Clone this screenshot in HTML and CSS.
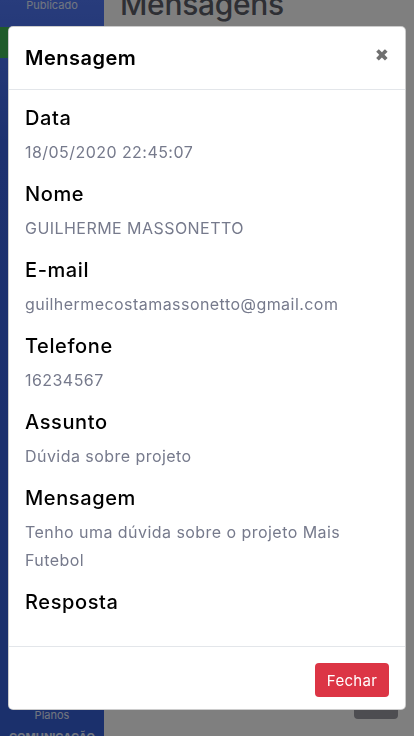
FILE: index.html
```html
<!DOCTYPE html>
<html lang="pt-BR">
<head>
    <meta charset="UTF-8">
    <meta name="viewport" content="width=device-width, initial-scale=1.0">
    <title>Mensagens</title>
    <link rel="stylesheet" href="styles.css">
</head>
<body>
    <div class="layout">
        <!-- Menu lateral -->
        <aside class="sidebar">
            <span class="side-item">Publicado</span>
            <span class="side-active"></span>
            <span class="side-spacer"></span>
            <span class="side-item">Planos</span>
            <span class="side-group">COMUNICAÇÃO</span>
        </aside>
        <main class="content">
            <h1 class="page-title">Mensagens</h1>
            <div class="content-spacer"></div>
            <div class="content-actions">
                <span class="btn-back"></span>
            </div>
        </main>
    </div>

    <div class="backdrop"></div>

    <!-- Modal da mensagem -->
    <div class="modal">
        <div class="modal-header">
            <h5 class="modal-title">Mensagem</h5>
            <button type="button" class="close">&#10006;</button>
        </div>
        <div class="modal-body">
            <h5>Data</h5>
            <p>18/05/2020 22:45:07</p>
            <h5>Nome</h5>
            <p>GUILHERME MASSONETTO</p>
            <h5>E-mail</h5>
            <p>guilhermecostamassonetto@gmail.com</p>
            <h5>Telefone</h5>
            <p>16234567</p>
            <h5>Assunto</h5>
            <p>Dúvida sobre projeto</p>
            <h5>Mensagem</h5>
            <p>Tenho uma dúvida sobre o projeto Mais Futebol</p>
            <h5>Resposta</h5>
            <p></p>
        </div>
        <div class="modal-footer">
            <button type="button" class="btn-danger">Fechar</button>
        </div>
    </div>
</body>
</html>
```
FILE: styles.css
```css
* {
    box-sizing: border-box;
}
body {
    margin: 0;
    font-family: Inter, "Open Sans", sans-serif;
    background-color: #fff;
    color: #212529;
    overflow: hidden;
}
.layout {
    display: flex;
    height: 100vh;
}
.sidebar {
    width: 104px;
    flex-shrink: 0;
    background: linear-gradient(#5078f8, #3a62de 20%, #3660d8);
    display: flex;
    flex-direction: column;
    align-items: center;
}
.side-item {
    font-size: 11px;
    color: #e4ecff;
    line-height: 14px;
    margin-top: -2px;
}
.side-active {
    width: 100%;
    height: 31px;
    margin-top: 15px;
    background: #40b656;
    border-radius: 0 12px 12px 0;
}
.side-spacer {
    flex: 1;
}
.side-group {
    font-size: 11px;
    font-weight: 700;
    color: #e4ecff;
    margin-top: 8px;
    margin-bottom: -8px;
}
.content {
    flex: 1;
    display: flex;
    flex-direction: column;
    padding: 0 16px 0 16px;
}
.page-title {
    margin: -14px 0 0 0;
    font-size: 30px;
    font-weight: 500;
    letter-spacing: -0.3px;
    color: #5c5e68;
}
.content-spacer {
    flex: 1;
}
.content-actions {
    display: flex;
    justify-content: flex-end;
    margin-bottom: 17px;
}
.btn-back {
    width: 44px;
    height: 30px;
    border-radius: 4px;
    background: #9a9aa2;
}
.backdrop {
    position: fixed;
    inset: 0;
    background: rgba(0, 0, 0, 0.5);
}
.modal {
    position: fixed;
    top: 26px;
    left: 8px;
    width: 398px;
    background: #fff;
    border: 1px solid rgba(0, 0, 0, 0.2);
    border-radius: 5px;
}
.modal-header {
    display: flex;
    justify-content: space-between;
    align-items: center;
    padding: 16px 16px 16px 16px;
    border-bottom: 1px solid #e3e6ea;
}
.modal-title {
    margin: 0;
    font-size: 20px;
    line-height: 30px;
    font-weight: 600;
    letter-spacing: 0.5px;
    color: #000;
}
.close {
    background: none;
    border: none;
    padding: 0;
    margin-top: -6px;
    font-family: "DejaVu Sans", sans-serif;
    font-size: 17px;
    line-height: 18px;
    color: #707070;
    cursor: pointer;
}
.modal-body {
    padding: 16px 16px 16px 16px;
}
.modal-body h5 {
    margin: 0 0 8px 0;
    font-size: 20px;
    line-height: 24px;
    font-weight: 500;
    letter-spacing: 0.6px;
    color: #000;
}
.modal-body p {
    margin: 0 0 16px 0;
    font-size: 16px;
    line-height: 28px;
    letter-spacing: 0.45px;
    color: #767a8c;
}
.modal-footer {
    display: flex;
    justify-content: flex-end;
    padding: 16px 16px 12px 16px;
    border-top: 1px solid #e3e6ea;
}
.btn-danger {
    background-color: #dc3545;
    color: #fff;
    border: none;
    border-radius: 4px;
    font-family: Inter, "Open Sans", sans-serif;
    font-size: 15px;
    letter-spacing: 0.3px;
    height: 34px;
    width: 74px;
    cursor: pointer;
}
```
